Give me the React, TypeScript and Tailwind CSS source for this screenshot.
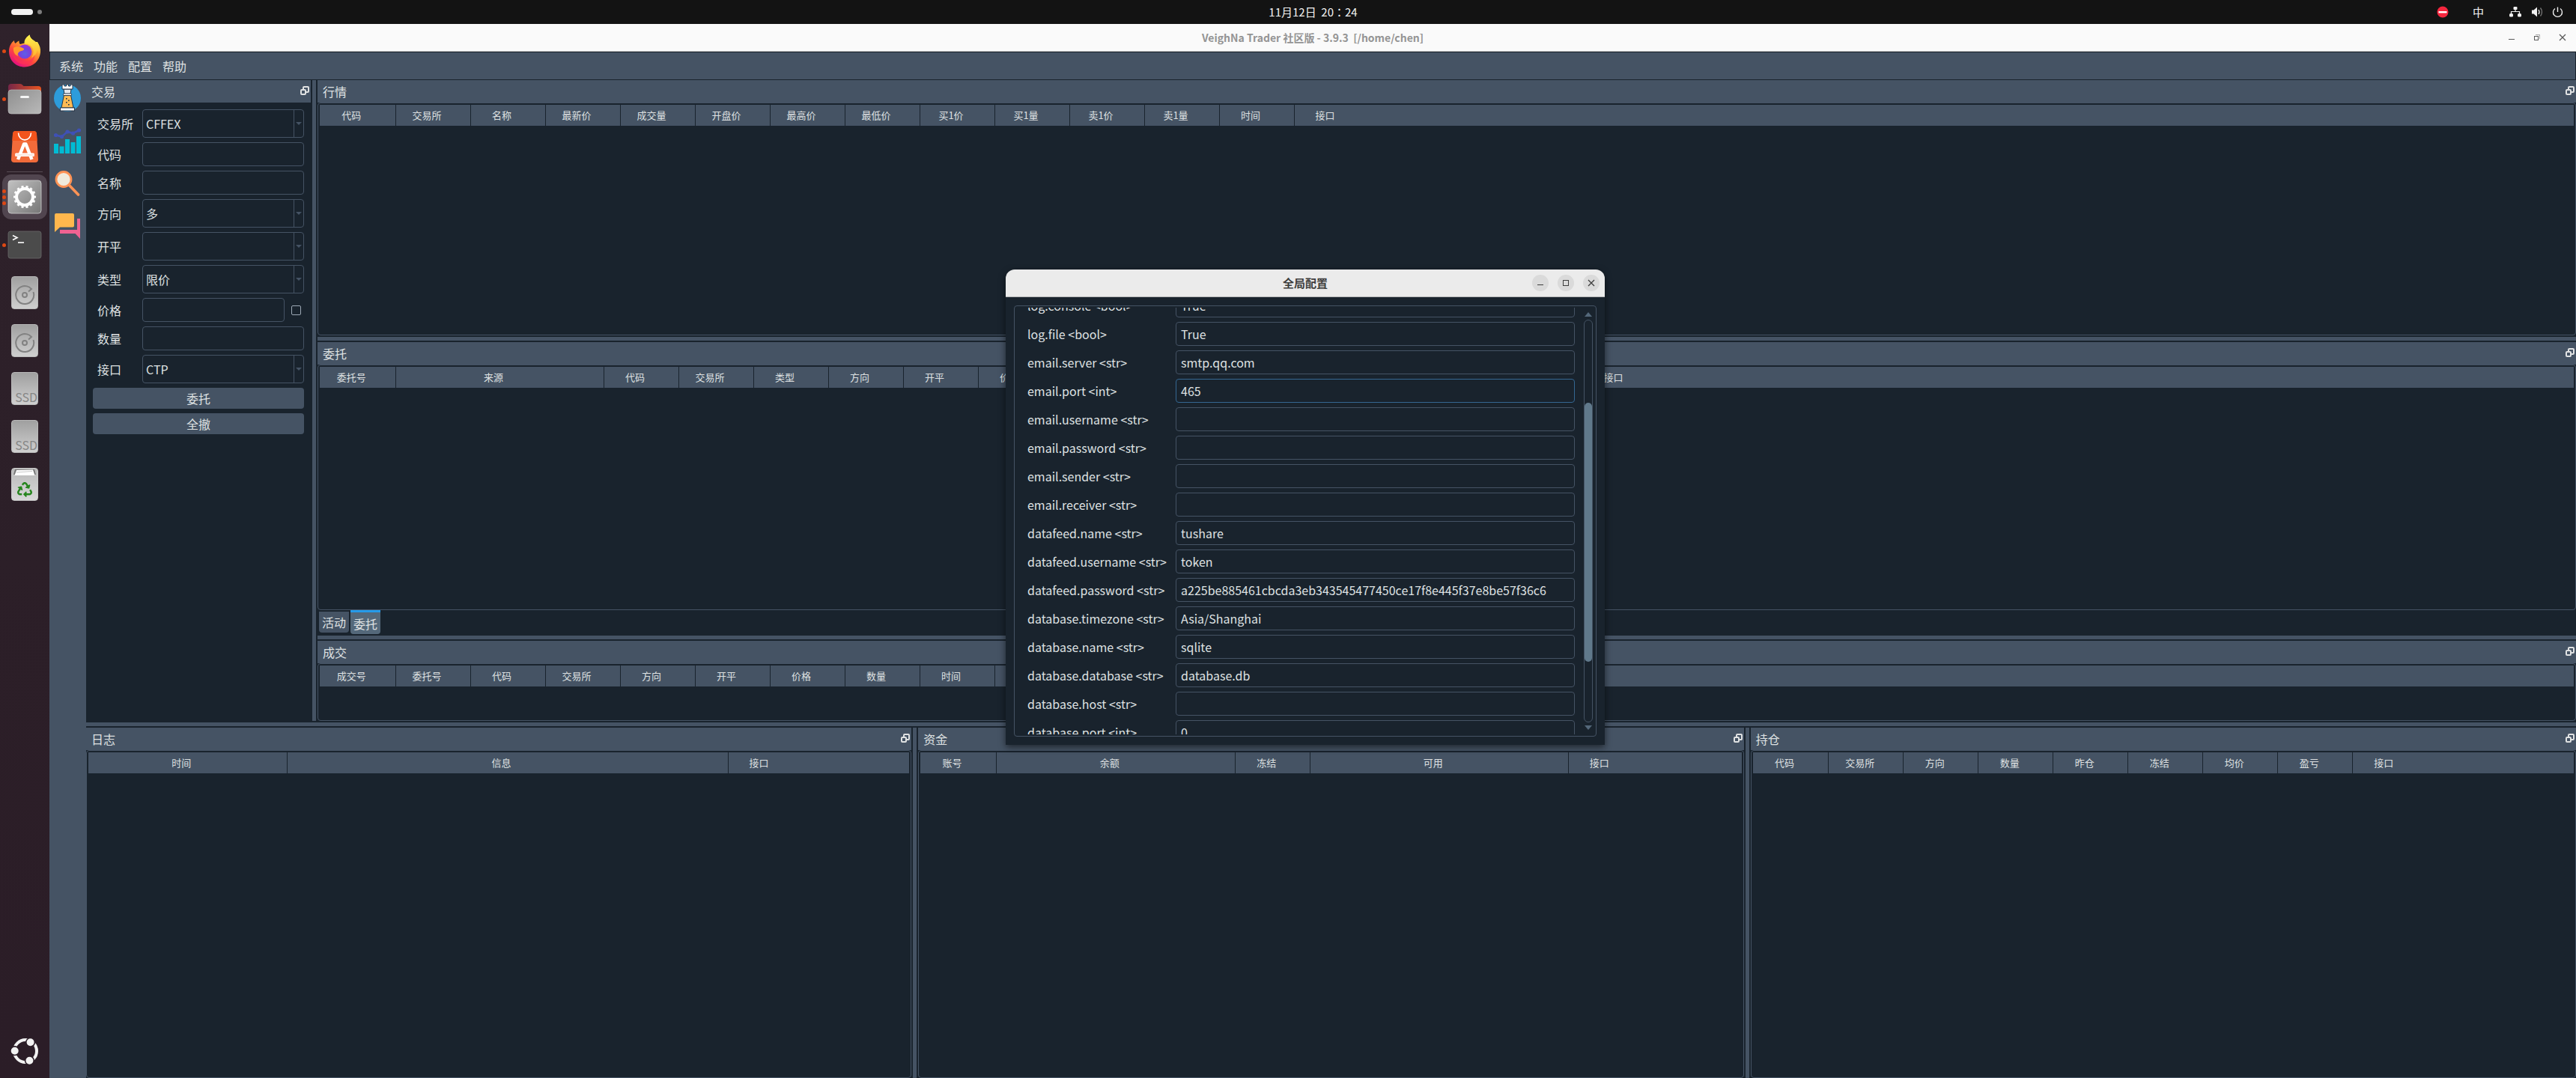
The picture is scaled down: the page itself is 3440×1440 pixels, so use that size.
import { FaRecycle } from "react-icons/fa";

const DOCK_DIVIDER = "bg-[#455364] bg-clip-content shrink-0";

const quoteColumns = [
  { title: "代码", width: 101 },
  { title: "交易所", width: 100 },
  { title: "名称", width: 100 },
  { title: "最新价", width: 100 },
  { title: "成交量", width: 100 },
  { title: "开盘价", width: 100 },
  { title: "最高价", width: 100 },
  { title: "最低价", width: 100 },
  { title: "买1价", width: 100 },
  { title: "买1量", width: 100 },
  { title: "卖1价", width: 100 },
  { title: "卖1量", width: 100 },
  { title: "时间", width: 100 },
  { title: "接口", width: 0 },
];

const orderColumns = [
  { title: "委托号", width: 101 },
  { title: "来源", width: 278 },
  { title: "代码", width: 100 },
  { title: "交易所", width: 100 },
  { title: "类型", width: 100 },
  { title: "方向", width: 100 },
  { title: "开平", width: 100 },
  { title: "价格", width: 100 },
  { title: "总数量", width: 100 },
  { title: "已成交", width: 100 },
  { title: "状态", width: 100 },
  { title: "时间", width: 407 },
  { title: "接口", width: 0 },
];

const tradeColumns = [
  { title: "成交号", width: 101 },
  { title: "委托号", width: 100 },
  { title: "代码", width: 100 },
  { title: "交易所", width: 100 },
  { title: "方向", width: 100 },
  { title: "开平", width: 100 },
  { title: "价格", width: 100 },
  { title: "数量", width: 100 },
  { title: "时间", width: 100 },
  { title: "接口", width: 0 },
];

const logColumns = [
  { title: "时间", width: 265 },
  { title: "信息", width: 589 },
  { title: "接口", width: 0 },
];

const accountColumns = [
  { title: "账号", width: 101 },
  { title: "余额", width: 319 },
  { title: "冻结", width: 100 },
  { title: "可用", width: 345 },
  { title: "接口", width: 0 },
];

const positionColumns = [
  { title: "代码", width: 101 },
  { title: "交易所", width: 100 },
  { title: "方向", width: 100 },
  { title: "数量", width: 100 },
  { title: "昨仓", width: 100 },
  { title: "冻结", width: 100 },
  { title: "均价", width: 100 },
  { title: "盈亏", width: 100 },
  { title: "接口", width: 0 },
];

const settings = [
  { name: "log.console", type: "bool", value: "True" },
  { name: "log.file", type: "bool", value: "True" },
  { name: "email.server", type: "str", value: "smtp.qq.com" },
  { name: "email.port", type: "int", value: "465", active: true },
  { name: "email.username", type: "str", value: "" },
  { name: "email.password", type: "str", value: "" },
  { name: "email.sender", type: "str", value: "" },
  { name: "email.receiver", type: "str", value: "" },
  { name: "datafeed.name", type: "str", value: "tushare" },
  { name: "datafeed.username", type: "str", value: "token" },
  {
    name: "datafeed.password",
    type: "str",
    value: "a225be885461cbcda3eb343545477450ce17f8e445f37e8be57f36c6",
  },
  { name: "database.timezone", type: "str", value: "Asia/Shanghai" },
  { name: "database.name", type: "str", value: "sqlite" },
  { name: "database.database", type: "str", value: "database.db" },
  { name: "database.host", type: "str", value: "" },
  { name: "database.port", type: "int", value: "0" },
];

/* ---------- launcher icons ---------- */

const FirefoxIcon = () => (
  <svg width="44" height="44" viewBox="0 0 44 44">
    <defs>
      <linearGradient id="ffBody" x1="0.8" y1="0.1" x2="0.25" y2="0.95">
        <stop offset="0" stopColor="#fff44f" />
        <stop offset="0.35" stopColor="#ffa12e" />
        <stop offset="0.65" stopColor="#ff4a3c" />
        <stop offset="1" stopColor="#e5107f" />
      </linearGradient>
      <linearGradient id="ffFlame" x1="0.5" y1="0" x2="0.5" y2="1">
        <stop offset="0" stopColor="#fff44f" />
        <stop offset="1" stopColor="#ffb02e" />
      </linearGradient>
      <radialGradient id="ffGlobe" cx="0.5" cy="0.65" r="0.65">
        <stop offset="0" stopColor="#5b5fe8" />
        <stop offset="0.6" stopColor="#7a3fdc" />
        <stop offset="1" stopColor="#a431d0" />
      </radialGradient>
    </defs>
    <path
      d="M8 8 C8 10 8.500 11 9.500 12 C11 10.500 13 9 14.500 8.500 C14.300 10.500 14.800 12 16 13 L24 11 C23 7 26 2.500 28.500 .5 C29 5 33 7 35.500 10.500 C37 10 38 10 39 10 C42 14.500 43.500 19 43 24 C42 35 33 43.500 22 43.500 C10.500 43.500 1 35 1 22.500 C1 16 4 11 8 8Z"
      fill="url(#ffBody)"
    />
    <path
      d="M28.500 .5 C23 4 20.500 9 22 13 C27 12 31 15 33 19 C34.500 23 33 28 31 31 C36 29 38 25 38.500 21 C40 22 40 24 40 26 C43 18 40 12 35 8.500 C31 6 29 4 28.500 .5Z"
      fill="url(#ffFlame)"
    />
    <circle cx="22" cy="23" r="9.500" fill="url(#ffGlobe)" />
    <path
      d="M7 18 C10 15 17 16 21 19 C21.500 21.500 18 22 16 22.500 C13 24 12 26 13 29 C8 27 6.500 22 7 18Z"
      fill="#ff9a2b"
    />
    <path
      d="M6 20 C6 31 14 37 23 36 C30 35.500 34 31 35 27 C36 34 30 40 22 40 C12 40 5 32 6 20Z"
      fill="#ff3355"
      opacity="0.65"
    />
  </svg>
);

const FilesIcon = () => (
  <svg width="46" height="42" viewBox="0 0 46 42">
    <defs>
      <linearGradient id="filesBack" x1="0" x2="1">
        <stop offset="0" stopColor="#762647" />
        <stop offset="1" stopColor="#e95420" />
      </linearGradient>
      <linearGradient id="filesFront" x1="0" y1="0" x2="1" y2="1">
        <stop offset="0" stopColor="#8f8f8f" />
        <stop offset="1" stopColor="#b9b9b9" />
      </linearGradient>
    </defs>
    <path d="M1 5 Q1 1 5 1 H17 Q19 1 20 2.500 L21.500 4 H41 Q45 4 45 8 V20 H1Z" fill="url(#filesBack)" />
    <rect x="1" y="9" width="44" height="32" rx="4" fill="url(#filesFront)" stroke="#c4c4c4" strokeWidth=".6" />
    <rect x="17" y="17" width="12" height="3" rx="1.500" fill="#f5f5f5" />
  </svg>
);

const SoftwareIcon = () => (
  <svg width="36" height="44" viewBox="0 0 36 44">
    <path d="M2 5 Q2.200 1 6 1 H30 Q33.800 1 34 5 L36 39 Q36 43 32 43 H4 Q0 43 0 39Z" fill="#f26b3a" />
    <path d="M2 5 Q2.200 1 6 1 H30 Q33.800 1 34 5 L34.600 14 H1.400Z" fill="#f2541d" />
    <path d="M9.500 3.500 C10 16 26 16 26.500 3.500" fill="none" stroke="#fff" strokeWidth="1.600" />
    <path d="M9 39 L17 18.500 H19.500 L27.500 39" fill="none" stroke="#fff" strokeWidth="4.400" strokeLinejoin="round" />
    <rect x="5" y="30.500" width="26" height="4.500" rx="1.500" fill="#fff" />
    <path d="M5 33 H31" stroke="#f8c9b6" strokeWidth="1" />
  </svg>
);

const SettingsIcon = () => (
  <svg width="46" height="46" viewBox="0 0 46 46">
    <defs>
      <linearGradient id="gearBack" x1="0" y1="0" x2="1" y2="1">
        <stop offset="0" stopColor="#c2c2c2" />
        <stop offset="1" stopColor="#777" />
      </linearGradient>
    </defs>
    <rect x="1" y="1" width="44" height="44" rx="4" fill="url(#gearBack)" stroke="#d2d2d2" strokeWidth=".8" />
    <circle cx="23" cy="23" r="11" fill="none" stroke="#fff" strokeWidth="4" />
    <circle cx="23" cy="23" r="13.500" fill="none" stroke="#fff" strokeWidth="3" pathLength="28" strokeDasharray="1 1" strokeDashoffset="0.5" />
  </svg>
);

const TerminalIcon = () => (
  <svg width="46" height="38" viewBox="0 0 46 38">
    <rect x="1" y="1" width="44" height="36" rx="3" fill="#4b4b4b" stroke="#6a6a6a" strokeWidth=".8" />
    <path d="M7 6.500 L13 9.500 L7 12.500" fill="none" stroke="#fff" strokeWidth="1.600" />
    <path d="M14 16 H22" stroke="#fff" strokeWidth="1.600" />
  </svg>
);

const DiskIcon = () => (
  <span className="flex h-11 w-9 items-end justify-center rounded border border-[#b9b9b9] bg-linear-to-b from-[#a0a0a0] to-[#cfcfcf] pb-1">
    <svg width="28" height="28" viewBox="0 0 28 28" fill="none" stroke="#828282" strokeWidth="2">
      <path d="M25.500 10 A12 12 0 1 1 20 3.500 L23 6 L19 9.500" />
      <circle cx="14" cy="14" r="3" />
    </svg>
  </span>
);

const SsdIcon = () => (
  <span className="flex h-11 w-9 items-end justify-end overflow-hidden rounded border border-[#b9b9b9] bg-linear-to-b from-[#a0a0a0] to-[#cfcfcf] text-base leading-5 text-[#868686]">
    SSD
  </span>
);

const TrashIcon = () => (
  <span className="flex h-11 w-9 flex-col items-center rounded border border-[#c9c9c9] bg-linear-to-b from-[#b9b9b9] to-[#d8d8d8]">
    <svg width="30" height="10" viewBox="0 0 30 10">
      <path d="M2 1 H28 L30 8 H0Z" fill="#777" />
      <path d="M4 2 L26 1.500 L28.500 9 H1.500Z" fill="#fff" />
      <path d="M4 5 L25 3.500" stroke="#bbb" strokeWidth=".8" />
    </svg>
    <FaRecycle className="mt-2 text-[#26851d]" size={20} />
  </span>
);

const UbuntuIcon = () => (
  <svg width="38" height="38" viewBox="0 0 38 38">
    <circle cx="20" cy="19" r="15" fill="none" stroke="#f2f2f2" strokeWidth="4" />
    <g fill="#f2f2f2" stroke="#2b1d27" strokeWidth="1.600">
      <circle cx="5.700" cy="18.700" r="5.800" />
      <circle cx="26.600" cy="7.300" r="5.800" />
      <circle cx="25.400" cy="31.700" r="5.800" />
    </g>
  </svg>
);

/* ---------- toolbar icons ---------- */

const RookIcon = () => (
  <svg width="36" height="36" viewBox="0 0 36 36">
    <circle cx="18" cy="18" r="18" fill="#2d9cdb" />
    <g stroke="#243447" strokeWidth="1">
      <path d="M13.500 14 H22.500 L26 31 H10Z" fill="#fdbb54" />
      <path d="M13 6 H23 L22 13 H14Z" fill="#e3e8ee" />
      <path d="M11 0 H14 V2 H16.500 V0 H19.500 V2 H22 V0 H25 V6 H11Z" fill="#fff" />
      <rect x="12.500" y="12" width="11" height="2.600" rx="1" fill="#fff" />
      <rect x="8.500" y="31" width="19" height="4" fill="#fff" />
    </g>
    <g fill="#243447">
      <rect x="16" y="18" width="1.600" height="1.600" />
      <rect x="19" y="20.500" width="1.600" height="1.600" />
      <rect x="16" y="23" width="1.600" height="1.600" />
      <rect x="19" y="26" width="1.600" height="1.600" />
    </g>
  </svg>
);

const ChartIcon = () => (
  <svg width="36" height="36" viewBox="0 0 36 36">
    <g fill="#00bcd4">
      <rect x="0" y="22" width="6" height="13" />
      <rect x="7.500" y="25.500" width="6" height="9.500" />
      <rect x="15" y="16" width="6" height="19" />
      <rect x="22.500" y="20" width="6" height="15" />
      <rect x="30" y="12" width="6" height="23" />
    </g>
    <path d="M2.500 10.500 L10.500 12.500 L18 6 L25.500 8 L33.500 4" fill="none" stroke="#3f51b5" strokeWidth="2.600" />
    <g fill="#3f51b5">
      <circle cx="2.500" cy="10.500" r="2.600" />
      <circle cx="10.500" cy="12.500" r="2.600" />
      <circle cx="18" cy="6" r="2.600" />
      <circle cx="25.500" cy="8" r="2.600" />
      <circle cx="33.500" cy="4" r="2.600" />
    </g>
  </svg>
);

const SearchIcon = () => (
  <svg width="36" height="36" viewBox="0 0 36 36">
    <path d="M20 20 L32.500 33" stroke="#ff9355" strokeWidth="3.600" strokeLinecap="round" />
    <circle cx="13" cy="12.500" r="10" fill="#f0ebdc" stroke="#ff9355" strokeWidth="2.800" />
  </svg>
);

const ChatIcon = () => (
  <svg width="36" height="36" viewBox="0 0 36 36">
    <path d="M31 8 H35 V35 L28.500 28 H8 V23 H31Z" fill="#f06292" />
    <path d="M3 1 H25 Q27 1 27 3 V17.500 Q27 19.500 25 19.500 H8 L1 26 V3 Q1 1 3 1Z" fill="#ffb74d" />
  </svg>
);

const FloatIcon = () => (
  <svg width="12" height="12" viewBox="0 0 12 12" fill="none" stroke="#dfe1e2" strokeWidth="2">
    <rect x="1" y="5" width="6" height="6" rx="1" />
    <path d="M4 4.500 V2 Q4 1 5 1 H10 Q11 1 11 2 V7 Q11 8 10 8 H8" />
  </svg>
);

/* ---------- building blocks ---------- */

const LauncherItem = (props: any) => {
  const { label, dots = 0, active, children } = props;

  return (
    <button
      aria-label={label}
      className="relative flex h-16 w-full shrink-0 items-center justify-center"
    >
      {active && <span className="absolute inset-x-[3px] inset-y-0.5 rounded-xl bg-[#51454f]" />}
      <span className="absolute left-[3px] flex flex-col gap-[3px]">
        {Array.from({ length: dots }).map((_, i) => (
          <span key={i} className="size-[5px] rounded-full bg-[#dd4814]" />
        ))}
      </span>
      <span className="relative">{children}</span>
    </button>
  );
};

const DockHeader = ({ title }: { title: string }) => (
  <div className="flex h-[30px] shrink-0 items-center justify-between bg-[#455364] pr-0.5 pl-[7px]">
    <h2 className="text-base leading-6">{title}</h2>
    <button aria-label="浮动" className="mb-0.5">
      <FloatIcon />
    </button>
  </div>
);

const DataTable = ({ columns }: { columns: { title: string; width: number }[] }) => (
  <div className="min-h-0 flex-1 overflow-hidden rounded border border-[#455364] p-0.5">
    <table className="w-full table-fixed border-collapse bg-[#455364]">
      <colgroup>
        {columns.map((c) => (
          <col key={c.title} style={c.width ? { width: c.width } : undefined} />
        ))}
      </colgroup>
      <thead>
        <tr>
          {columns.map((c) =>
            c.width ? (
              <th
                key={c.title}
                className="h-7 border-r border-[#19232d] p-0 pr-4 text-[13px] leading-5 font-normal"
              >
                {c.title}
              </th>
            ) : (
              <th key={c.title} className="h-7 p-0 text-[13px] leading-5 font-normal">
                <span className="block w-[82px] text-center">{c.title}</span>
              </th>
            )
          )}
        </tr>
      </thead>
    </table>
  </div>
);

const Dock = (props: any) => {
  const { title, columns, className, children } = props;

  return (
    <section className={`flex min-w-0 flex-col ${className}`}>
      <DockHeader title={title} />
      <DataTable columns={columns} />
      {children}
    </section>
  );
};

const RowSplitter = () => <div className={`h-[9px] py-0.5 ${DOCK_DIVIDER}`} />;
const ColSplitter = () => <div className={`w-[9px] px-0.5 ${DOCK_DIVIDER}`} />;

const FieldLabel = ({ id, text }: { id: string; text: string }) => (
  <label htmlFor={id} className="w-[66px] shrink-0 pl-1.5 text-base leading-6">
    {text}
  </label>
);

const SelectField = ({ id, label, value }: { id: string; label: string; value: string }) => (
  <div className="flex items-center">
    <FieldLabel id={id} text={label} />
    <div className="flex h-[38px] flex-1 rounded border border-[#455364]">
      <select
        id={id}
        defaultValue={value}
        className="min-w-0 flex-1 appearance-none border-r border-[#455364] bg-transparent pl-1 text-base outline-none"
      >
        <option value={value}>{value}</option>
      </select>
      <span className="flex w-3 items-center justify-center">
        <svg width="8" height="4" viewBox="0 0 8 4">
          <path d="M0 0 H8 L4 4Z" fill="#455364" />
        </svg>
      </span>
    </div>
  </div>
);

const TextField = (props: any) => {
  const { id, label, children } = props;

  return (
    <div className="flex items-center">
      <FieldLabel id={id} text={label} />
      <input
        id={id}
        type="text"
        className="h-8 min-w-0 flex-1 rounded border border-[#455364] bg-transparent px-1 text-base outline-none"
      />
      {children}
    </div>
  );
};

const TradingPanel = () => (
  <section className="flex w-[300px] shrink-0 flex-col">
    <DockHeader title="交易" />
    <form className="flex flex-col gap-1.5 p-[9px]">
      <SelectField id="exchange" label="交易所" value="CFFEX" />
      <TextField id="symbol" label="代码" />
      <TextField id="name" label="名称" />
      <SelectField id="direction" label="方向" value="多" />
      <SelectField id="offset" label="开平" value="" />
      <SelectField id="type" label="类型" value="限价" />
      <TextField id="price" label="价格">
        <input
          type="checkbox"
          aria-label="价格随行情更新"
          className="mr-1 ml-[9px] size-[13px] appearance-none rounded-xs border border-[#9da9b5]"
        />
      </TextField>
      <TextField id="volume" label="数量" />
      <SelectField id="gateway" label="接口" value="CTP" />
      <button type="button" className="h-7 rounded bg-[#455364] text-base leading-6">
        委托
      </button>
      <button type="button" className="h-7 rounded bg-[#455364] text-base leading-6">
        全撤
      </button>
    </form>
  </section>
);

const TopBar = () => (
  <header className="grid h-8 shrink-0 grid-cols-3 items-center bg-[#131313] text-[#f2f2f2]">
    <div className="flex items-center gap-1.5 pl-[15px]">
      <span className="h-2 w-[29px] rounded-full bg-[#f2f2f2]" />
      <span className="size-1.5 rounded-full bg-[#7d7d7d]" />
    </div>
    {/* the JP face centres the full-width colon */}
    <time className="pl-[67px] text-center font-['Noto_Sans_CJK_JP',sans-serif] text-[15px] leading-5 whitespace-pre">
      11月12日  20：24
    </time>
    <div className="flex items-center justify-end pr-[17px]">
      <svg width="16" height="16" viewBox="0 0 16 16" className="mr-8">
        <circle cx="8" cy="8" r="7.500" fill="#f4263e" />
        <rect x="2.500" y="7" width="11" height="2.400" fill="#fff" />
      </svg>
      <span className="mr-[34px] text-[15px] leading-5">中</span>
      <svg width="16" height="14" viewBox="0 0 16 14" className="mr-3.5" fill="#f2f2f2">
        <rect x="5.500" y="0" width="5" height="4" rx="1" />
        <rect x="0" y="9" width="5" height="4.500" rx="1.500" />
        <rect x="11" y="9" width="5" height="4.500" rx="1.500" />
        <path d="M8 4 V6.500 M2.500 9.500 V6.500 H13.500 V9.500" fill="none" stroke="#f2f2f2" strokeWidth="1.200" />
      </svg>
      <svg width="15" height="14" viewBox="0 0 15 14" className="mr-3" fill="none" stroke="#f2f2f2">
        <path d="M0 4.500 H2.500 L7 .5 V13.500 L2.500 9.500 H0Z" fill="#f2f2f2" stroke="none" />
        <path d="M9 4 Q11 7 9 10" strokeWidth="1.300" />
        <path d="M11.500 1.500 Q15.500 7 11.500 12.500" strokeWidth="1.300" opacity=".45" />
      </svg>
      <svg width="15" height="15" viewBox="0 0 15 15" fill="none" stroke="#f2f2f2" strokeWidth="1.400">
        <path d="M4 2.500 A6 6 0 1 0 11 2.500" />
        <path d="M7.500 .5 V7" />
      </svg>
    </div>
  </header>
);

const Launcher = () => (
  <nav className="flex w-[66px] shrink-0 flex-col bg-linear-to-b from-[#2f222b] via-[#2c1f28] to-[#2b1d27] pt-1">
    <LauncherItem label="Firefox" dots={1}><FirefoxIcon /></LauncherItem>
    <LauncherItem label="文件" dots={1}><FilesIcon /></LauncherItem>
    <LauncherItem label="应用中心"><SoftwareIcon /></LauncherItem>
    <div className="mx-[9px] my-px h-px shrink-0 bg-[#574c54]" />
    <LauncherItem label="设置" dots={3} active><SettingsIcon /></LauncherItem>
    <LauncherItem label="终端" dots={1}><TerminalIcon /></LauncherItem>
    <LauncherItem label="磁盘"><DiskIcon /></LauncherItem>
    <LauncherItem label="磁盘"><DiskIcon /></LauncherItem>
    <LauncherItem label="固态硬盘"><SsdIcon /></LauncherItem>
    <LauncherItem label="固态硬盘"><SsdIcon /></LauncherItem>
    <LauncherItem label="回收站"><TrashIcon /></LauncherItem>
    <div className="mt-auto pb-1">
      <LauncherItem label="显示应用"><UbuntuIcon /></LauncherItem>
    </div>
  </nav>
);

const TitleBar = () => (
  <div className="grid h-[37px] shrink-0 grid-cols-[1fr_auto_1fr] items-center border-b border-[#c6c6c6] bg-[#fafafa] px-3 text-[#5a5a5a]">
    <span />
    <h1 className="text-sm leading-5 font-bold whitespace-pre text-[#949494]">
      VeighNa Trader 社区版 - 3.9.3  [/home/chen]
    </h1>
    <div className="flex justify-end gap-[22px]">
      <button aria-label="最小化">
        <svg width="12" height="12" viewBox="0 0 12 12"><path d="M2 8.500 H10" stroke="currentColor" /></svg>
      </button>
      <button aria-label="还原">
        <svg width="12" height="12" viewBox="0 0 12 12" fill="none" stroke="currentColor">
          <rect x="2.500" y="4.500" width="5" height="5" />
          <path d="M4 2.500 H9.500 V8" opacity=".5" />
        </svg>
      </button>
      <button aria-label="关闭">
        <svg width="12" height="12" viewBox="0 0 12 12"><path d="M2 2 L10 10 M10 2 L2 10" stroke="currentColor" strokeWidth="1.300" /></svg>
      </button>
    </div>
  </div>
);

const ConfigDialog = () => (
  <div
    role="dialog"
    aria-label="全局配置"
    className="absolute top-[360px] left-[1343px] flex h-[635px] w-[800px] flex-col overflow-hidden rounded-t-xl bg-[#19232d] shadow-[0_3px_10px_rgba(0,0,0,0.55)]"
  >
    <div className="grid h-[37px] shrink-0 grid-cols-[1fr_auto_1fr] items-center border-b border-[#b5b5b5] bg-[#ebebeb] px-[7px] text-[#3d3d3d]">
      <span />
      <h2 className="text-[15px] leading-5 font-bold">全局配置</h2>
      <div className="flex justify-end gap-3">
        <button aria-label="最小化" className="size-[22px] rounded-full bg-[#dadada]">
          <svg width="22" height="22" viewBox="0 0 22 22"><path d="M7 13.500 H15" stroke="currentColor" /></svg>
        </button>
        <button aria-label="最大化" className="size-[22px] rounded-full bg-[#dadada]">
          <svg width="22" height="22" viewBox="0 0 22 22"><rect x="7.500" y="7.500" width="7" height="7" fill="none" stroke="currentColor" /></svg>
        </button>
        <button aria-label="关闭" className="size-[22px] rounded-full bg-[#dadada]">
          <svg width="22" height="22" viewBox="0 0 22 22"><path d="M7 7 L15 15 M15 7 L7 15" stroke="currentColor" strokeWidth="1.300" /></svg>
        </button>
      </div>
    </div>
    <div className="m-[11px] flex min-h-0 flex-1 rounded border border-[#455364] py-0.5 pr-1 pl-[17px]">
      <div className="flex-1 overflow-hidden">
        {/* scrolled a little past the top of the first row */}
        <div className="-mt-[19px] flex flex-col gap-1.5">
          {settings.map((s) => (
            <div key={s.name} className="flex items-center">
              <label htmlFor={s.name} className="w-[198px] shrink-0 text-base leading-6">
                {s.name} &lt;{s.type}&gt;
              </label>
              <input
                id={s.name}
                type="text"
                defaultValue={s.value}
                className={`h-8 min-w-0 flex-1 rounded border bg-transparent px-1.5 text-base outline-none ${
                  s.active ? "border-[#346792]" : "border-[#455364]"
                }`}
              />
            </div>
          ))}
        </div>
      </div>
      <div className="ml-3 flex w-3 flex-col items-center gap-1 py-1.5">
        <svg width="10" height="6" viewBox="0 0 10 6" className="shrink-0"><path d="M0 6 L5 0 L10 6Z" fill="#54687a" /></svg>
        <div className="w-full flex-1 rounded-md border border-[#455364] pt-[110px]">
          <div className="h-[346px] rounded-md bg-[#60798b]" />
        </div>
        <svg width="10" height="6" viewBox="0 0 10 6" className="shrink-0"><path d="M0 0 H10 L5 6Z" fill="#54687a" /></svg>
      </div>
    </div>
  </div>
);

const App = () => {
  return (
    <div className="relative flex h-screen flex-col overflow-hidden bg-[#19232d] font-['Noto_Sans_CJK_SC','Noto_Sans',sans-serif] text-[#dfe1e2]">
      <TopBar />
      <div className="flex min-h-0 flex-1">
        <Launcher />
        <main className="flex min-w-0 flex-1 flex-col">
          <TitleBar />
          <div className="flex h-[38px] shrink-0 items-center gap-3.5 border border-[#19232d] bg-[#455364] pl-3 text-base leading-6">
            <button>系统</button>
            <button>功能</button>
            <button>配置</button>
            <button>帮助</button>
          </div>
          <div className="flex min-h-0 flex-1">
            <div className="flex w-[49px] shrink-0 flex-col gap-[21px] bg-[#455364] pt-1.5 pl-1.5">
              <button aria-label="CTA策略"><RookIcon /></button>
              <button aria-label="图表"><ChartIcon /></button>
              <button aria-label="查询合约"><SearchIcon /></button>
              <button aria-label="社区论坛"><ChatIcon /></button>
            </div>
            <div className="flex min-w-0 flex-1 flex-col">
              <div className="flex h-[856px] shrink-0">
                <TradingPanel />
                <ColSplitter />
                <div className="flex min-w-0 flex-1 flex-col">
                  <Dock title="行情" columns={quoteColumns} className="h-[341px]" />
                  <RowSplitter />
                  <Dock title="委托" columns={orderColumns} className="h-[390px]">
                    <div role="tablist" className="flex h-8 shrink-0 items-center gap-0.5 pl-0.5 text-base leading-6">
                      <button role="tab" className="h-7 w-10 rounded-b bg-[#455364]">
                        活动
                      </button>
                      <button role="tab" aria-selected="true" className="h-8 w-10 rounded-b border-t-3 border-[#259ae9] bg-[#54687a]">
                        委托
                      </button>
                    </div>
                  </Dock>
                  <RowSplitter />
                  <Dock title="成交" columns={tradeColumns} className="min-h-0 flex-1" />
                </div>
              </div>
              <RowSplitter />
              <div className="flex min-h-0 flex-1">
                <Dock title="日志" columns={logColumns} className="flex-1" />
                <ColSplitter />
                <Dock title="资金" columns={accountColumns} className="flex-1" />
                <ColSplitter />
                <Dock title="持仓" columns={positionColumns} className="flex-1" />
              </div>
            </div>
          </div>
        </main>
      </div>
      <ConfigDialog />
    </div>
  );
};

export default App;
